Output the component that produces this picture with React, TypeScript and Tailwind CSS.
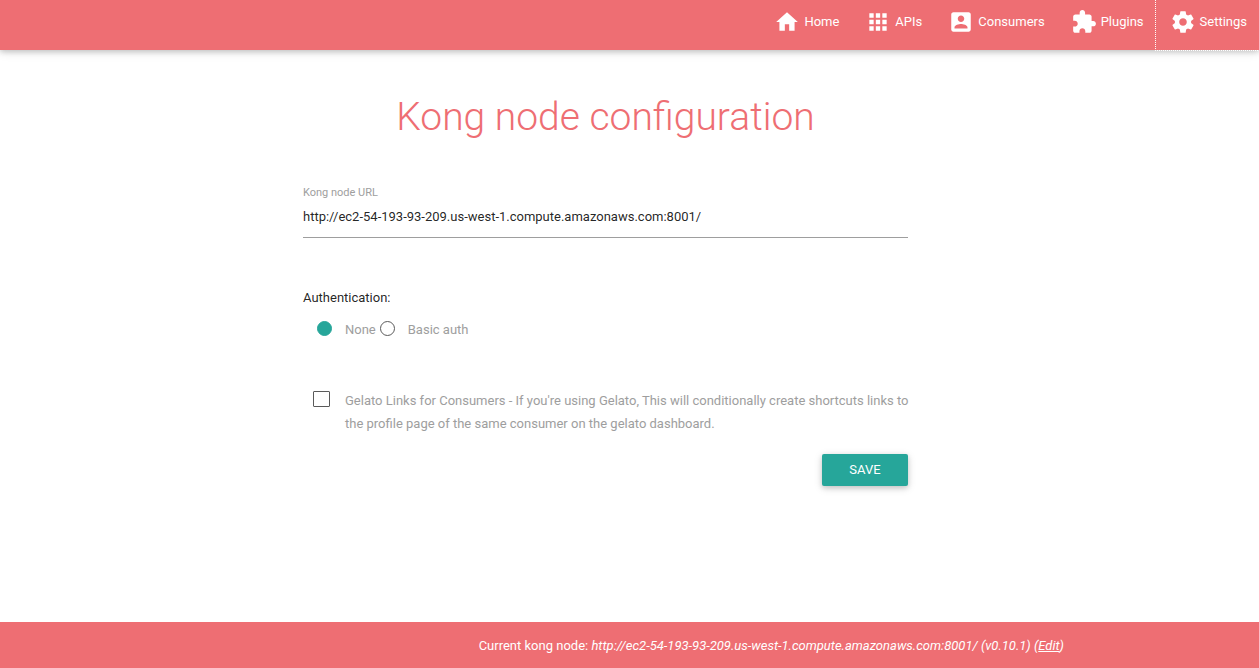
import { useState } from "react";

const NODE_URL = "http://ec2-54-193-93-209.us-west-1.compute.amazonaws.com:8001/";

const NAV_ITEMS = [
  { label: "Home", path: "M10 20v-6h4v6h5v-8h3L12 3 2 12h3v8z" },
  {
    label: "APIs",
    path: "M4 8h4V4H4v4zm6 12h4v-4h-4v4zm-6 0h4v-4H4v4zm0-6h4v-4H4v4zm6 0h4v-4h-4v4zm6-10v4h4V4h-4zm-6 4h4V4h-4v4zm6 6h4v-4h-4v4zm0 6h4v-4h-4v4z",
  },
  {
    label: "Consumers",
    path: "M3 5v14c0 1.1.89 2 2 2h14c1.1 0 2-.9 2-2V5c0-1.1-.9-2-2-2H5c-1.11 0-2 .9-2 2zm12 4c0 1.66-1.34 3-3 3s-3-1.34-3-3 1.34-3 3-3 3 1.34 3 3zm-9 8c0-2 4-3.1 6-3.1s6 1.1 6 3.1v1H6v-1z",
  },
  {
    label: "Plugins",
    path: "M20.5 11H19V7c0-1.1-.9-2-2-2h-4V3.5C13 2.12 11.88 1 10.5 1S8 2.12 8 3.5V5H4c-1.1 0-1.99.9-1.99 2v3.8H3.5c1.49 0 2.7 1.21 2.7 2.7s-1.21 2.7-2.7 2.7H2V20c0 1.1.9 2 2 2h3.8v-1.5c0-1.49 1.21-2.7 2.7-2.7 1.49 0 2.7 1.21 2.7 2.7V22H17c1.1 0 2-.9 2-2v-4h1.5c1.38 0 2.5-1.12 2.5-2.5S21.88 11 20.5 11z",
  },
  {
    label: "Settings",
    active: true,
    path: "M19.43 12.98c.04-.32.07-.64.07-.98s-.03-.66-.07-.98l2.11-1.65c.19-.15.24-.42.12-.64l-2-3.46c-.12-.22-.39-.3-.61-.22l-2.49 1c-.52-.4-1.08-.73-1.69-.98l-.38-2.65C14.46 2.18 14.25 2 14 2h-4c-.25 0-.46.18-.49.42l-.38 2.65c-.61.25-1.17.59-1.69.98l-2.49-1c-.23-.09-.49 0-.61.22l-2 3.46c-.13.22-.07.49.12.64l2.11 1.65c-.04.32-.07.65-.07.98s.03.66.07.98l-2.11 1.65c-.19.15-.24.42-.12.64l2 3.46c.12.22.39.3.61.22l2.49-1c.52.4 1.08.73 1.69.98l.38 2.65c.03.24.24.42.49.42h4c.25 0 .46-.18.49-.42l.38-2.65c.61-.25 1.17-.59 1.69-.98l2.49 1c.23.09.49 0 .61-.22l2-3.46c.12-.22.07-.49-.12-.64l-2.11-1.65zM12 15.5c-1.93 0-3.5-1.57-3.5-3.5s1.57-3.5 3.5-3.5 3.5 1.57 3.5 3.5-1.57 3.5-3.5 3.5z",
  },
];

function Header() {
  return (
    <header className="relative h-[50px] bg-[#ee6e73] shadow-[0_2px_5px_0_rgba(0,0,0,0.16),0_2px_10px_0_rgba(0,0,0,0.12)]">
      <nav className="flex h-full justify-end">
        {NAV_ITEMS.map((item) => (
          <a
            key={item.label}
            href={"#" + item.label.toLowerCase()}
            className={
              item.active
                ? "flex items-center gap-1 pb-1.5 pl-3.5 pr-3 text-white outline-1 outline-dotted outline-white"
                : "flex items-center gap-1 pb-1.5 pl-3.5 pr-3 text-white"
            }
          >
            <svg viewBox="0 0 24 24" className="size-[26px] fill-current" aria-hidden="true">
              <path d={item.path} />
            </svg>
            {item.label}
          </a>
        ))}
      </nav>
    </header>
  );
}

function AuthOption({ value, label, current, onSelect }: {
  value: string;
  label: string;
  current: string;
  onSelect: (value: string) => void;
}) {
  return (
    <label className="flex items-center gap-[13px] text-[#9e9e9e]">
      <input
        type="radio"
        name="auth"
        value={value}
        checked={current === value}
        onChange={() => onSelect(value)}
        className="mb-1 size-[15px] shrink-0 appearance-none rounded-full border border-[#5a5a5a] checked:border-[#26a69a] checked:bg-[#26a69a]"
      />
      {label}
    </label>
  );
}

export default function App() {
  const [url, setUrl] = useState(NODE_URL);
  const [auth, setAuth] = useState("none");
  const [gelato, setGelato] = useState(false);

  return (
    <div className="flex min-h-screen flex-col bg-white font-[Roboto,sans-serif] text-[13px] leading-5 text-black/87">
      <Header />
      <main className="flex flex-1 justify-center pl-0 pr-12">
        <form className="w-[605px] max-w-full pt-[41px]" onSubmit={(e) => e.preventDefault()}>
          <h1 className="text-center text-[39px] font-light leading-[52px] text-[#ee6e73]">
            Kong node configuration
          </h1>

          <div className="pt-10">
            <label htmlFor="node-url" className="block text-[11px] leading-[19px] text-[#9e9e9e]">
              Kong node URL
            </label>
            <input
              id="node-url"
              type="text"
              value={url}
              onChange={(e) => setUrl(e.target.value)}
              className="block h-9 w-full border-b border-[#9e9e9e] pb-1.5 outline-none"
            />
          </div>

          <fieldset className="mt-[50px]">
            <legend>Authentication:</legend>
            <div className="mt-3 flex gap-1 pl-3.5">
              <AuthOption value="none" label="None" current={auth} onSelect={setAuth} />
              <AuthOption value="basic" label="Basic auth" current={auth} onSelect={setAuth} />
            </div>
          </fieldset>

          <label className="-mr-2 mt-[49px] flex items-start gap-[15px] pl-2.5 leading-[23px] text-[#9e9e9e]">
            <input
              type="checkbox"
              checked={gelato}
              onChange={(e) => setGelato(e.target.checked)}
              className="mt-0.5 h-4 w-[17px] shrink-0 appearance-none rounded-[1px] border border-[#5a5a5a] checked:border-[#26a69a] checked:bg-[#26a69a]"
            />
            <span>
              Gelato Links for Consumers - If you're using Gelato, This will conditionally create
              shortcuts links to the profile page of the same consumer on the gelato dashboard.
            </span>
          </label>

          <div className="mt-[19px] flex justify-end">
            <button
              type="submit"
              className="h-8 w-[86px] rounded-xs bg-[#26a69a] uppercase text-white shadow-[0_2px_5px_0_rgba(0,0,0,0.16),0_2px_10px_0_rgba(0,0,0,0.12)]"
            >
              Save
            </button>
          </div>
        </form>
      </main>
      <footer className="flex h-[46px] items-center justify-end bg-[#ee6e73] pr-[195px] pt-0.5 text-white">
        <p>
          Current kong node:{" "}
          <em>
            {NODE_URL} (v0.10.1) (
            <a href="#settings" className="underline">
              Edit
            </a>
            )
          </em>
        </p>
      </footer>
    </div>
  );
}
